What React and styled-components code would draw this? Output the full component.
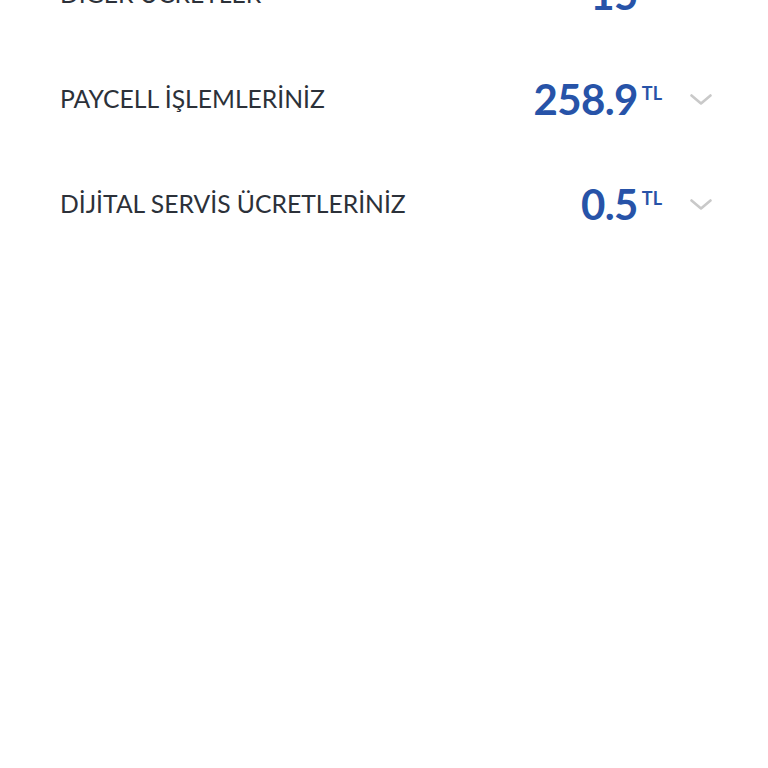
import React from "react";
import styled, { createGlobalStyle } from "styled-components";

const Global = createGlobalStyle`
  html, body { margin: 0; padding: 0; background: #ffffff; }
  body { font-family: "Lato", "Noto Sans", sans-serif; overflow: hidden; }
`;

const Page = styled.div`
  width: 768px;
  height: 768px;
  background: #ffffff;
  overflow: hidden;
`;

const List = styled.div`
  display: flex;
  flex-direction: column;
  margin-top: -59px;
  padding: 0 56px 0 60px;
`;

const Row = styled.div`
  height: 105px;
  display: flex;
  align-items: center;
  justify-content: space-between;
`;

const Label = styled.div`
  font-family: "Lato", sans-serif;
  font-size: 24.7px;
  font-weight: 400;
  color: #2c3139;
  letter-spacing: 0;
`;

const Right = styled.div`
  display: flex;
  align-items: center;
`;

const Amount = styled.div`
  display: flex;
  align-items: flex-start;
  color: #2753a8;
  margin-top: 1px;
`;

const Value = styled.span`
  font-family: "Lato", sans-serif;
  font-size: 42px;
  font-weight: 700;
  line-height: 1;
  letter-spacing: -0.6px;
`;

const Unit = styled.span`
  font-family: "Lato", sans-serif;
  font-size: 18px;
  font-weight: 700;
  line-height: 1;
  margin-left: 4px;
  margin-top: 6px;
`;

const Chevron = styled.svg`
  width: 22px;
  height: 11px;
  margin-left: 28px;
  margin-top: 2px;
`;

const rows = [
  { label: "DİĞER ÜCRETLER", value: "15" },
  { label: "PAYCELL İŞLEMLERİNİZ", value: "258.9" },
  { label: "DİJİTAL SERVİS ÜCRETLERİNİZ", value: "0.5" },
];

export default function App() {
  return (
    <Page>
      <Global />
      <List>
        {rows.map((r) => (
          <Row key={r.label}>
            <Label>{r.label}</Label>
            <Right>
              <Amount>
                <Value>{r.value}</Value>
                <Unit>TL</Unit>
              </Amount>
              <Chevron viewBox="0 0 22 11">
                <path d="M1.5 1.5 L11 9.5 L20.5 1.5" fill="none" stroke="#c9c9c9" strokeWidth="2.6" strokeLinecap="round" strokeLinejoin="round" />
              </Chevron>
            </Right>
          </Row>
        ))}
      </List>
    </Page>
  );
}
